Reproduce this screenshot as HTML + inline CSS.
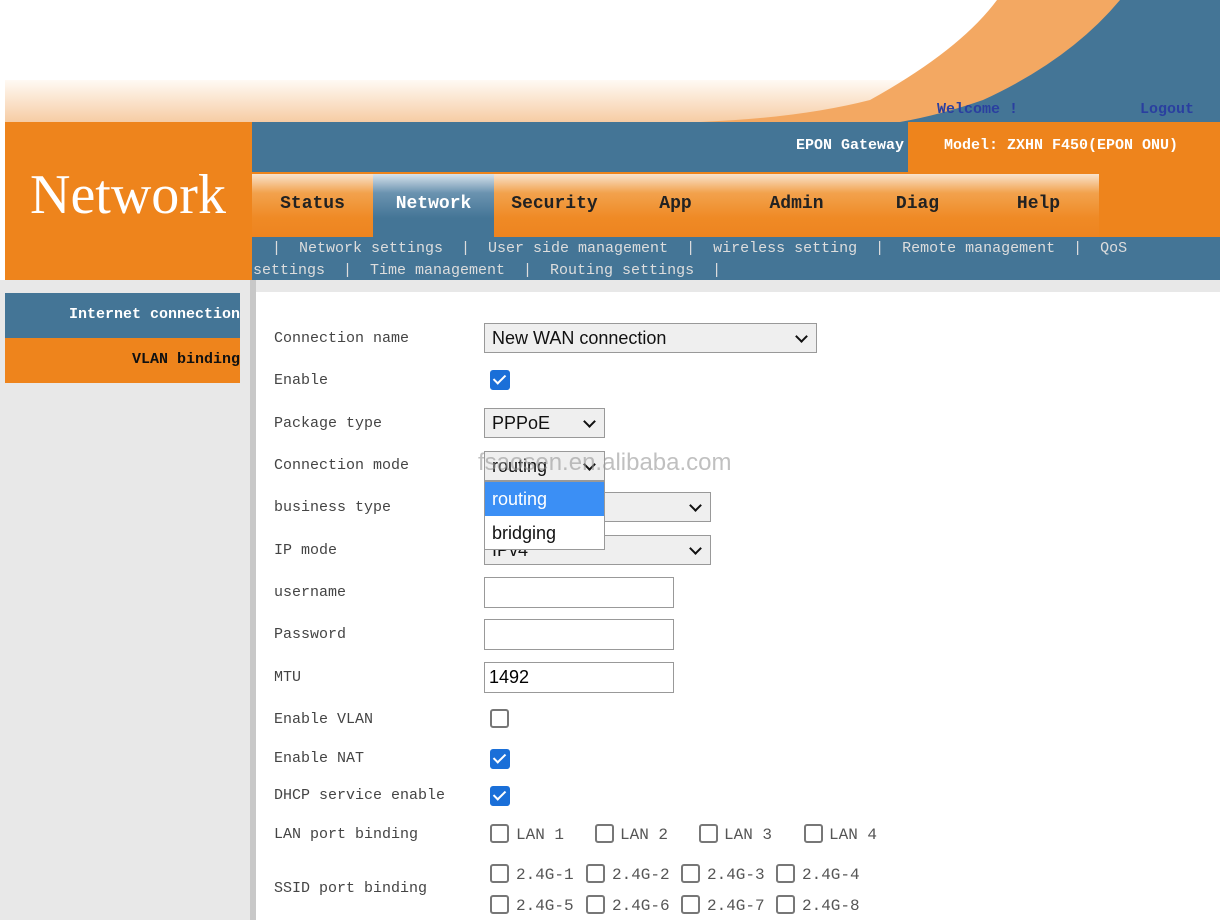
<!DOCTYPE html>
<html><head><meta charset="utf-8"><style>
*{margin:0;padding:0;box-sizing:border-box}
body{width:1220px;height:920px;overflow:hidden;background:#fff;position:relative;font-family:"Liberation Mono",monospace}
.abs{position:absolute}
.lbl{position:absolute;left:274px;font-family:"Liberation Mono",monospace;font-size:15px;color:#444}
.sel{position:absolute;background:#efefef;border:1px solid #999;font-family:"Liberation Sans",sans-serif;font-size:18px;color:#111;padding-left:7px;line-height:28px}
.sel:after{content:"";position:absolute;right:10px;top:8px;width:7px;height:7px;border-right:2px solid #111;border-bottom:2px solid #111;transform:rotate(45deg)}
.inp{position:absolute;left:484px;width:190px;height:31px;border:1px solid #999;background:#fff;font-family:"Liberation Sans",sans-serif;font-size:18px;padding-left:4px;line-height:29px}
.cb{position:absolute;width:20px;height:20px;border-radius:3px;background:#1a6fd8}
.cb:after{content:"";position:absolute;left:6px;top:2px;width:5px;height:10px;border-right:2.5px solid #fff;border-bottom:2.5px solid #fff;transform:rotate(45deg)}
.ub{position:absolute;width:19px;height:19px;border:2px solid #777;border-radius:3px;background:#fff}
.ct{position:absolute;font-family:"Liberation Mono",monospace;font-size:16px;color:#555}
.tab{position:absolute;top:174px;height:63px;width:121px;text-align:center;line-height:60px;font-family:"Liberation Mono",monospace;font-weight:bold;font-size:18px;color:#222;background:linear-gradient(#f9e3cd,#f2a24d 30%,#ef8a25 70%,#ee8420)}
.sub{color:#ddd;font-size:15px}
</style></head><body>
<svg class="abs" style="left:0;top:0" width="1220" height="125">
<defs><linearGradient id="pg" x1="0" y1="0" x2="0" y2="1"><stop offset="0" stop-color="#fffaf4"/><stop offset="1" stop-color="#f6cca4"/></linearGradient></defs>
<rect x="5" y="80" width="1215" height="42" fill="url(#pg)"/>
<path d="M997 0 Q960 50 870 100 Q800 118 700 122 L1220 122 L1220 0 Z" fill="#f3a862"/>
<path d="M1120 0 Q1070 60 983 100 Q940 115 900 122 L1220 122 L1220 0 Z" fill="#447596"/>
</svg>
<div class="abs" style="left:937px;top:101px;font-family:'Liberation Mono',monospace;font-weight:bold;font-size:15px;color:#2a3fa0">Welcome !</div>
<div class="abs" style="left:1140px;top:101px;font-family:'Liberation Mono',monospace;font-weight:bold;font-size:15px;color:#2a3fa0">Logout</div>
<div class="abs" style="left:5px;top:122px;width:247px;height:158px;background:#ee841c"></div>
<div class="abs" style="left:30px;top:163px;font-family:'Liberation Serif',serif;font-size:56px;color:#fff">Network</div>
<div class="abs" style="left:252px;top:122px;width:968px;height:50px;background:#447596"></div>
<div class="abs" style="left:908px;top:122px;width:312px;height:115px;background:#ee841c"></div>
<div class="abs" style="left:796px;top:137px;width:112px;overflow:hidden;white-space:nowrap;font-family:'Liberation Mono',monospace;font-weight:bold;font-size:15px;color:#fff">EPON Gateway</div>
<div class="abs" style="left:944px;top:137px;font-family:'Liberation Mono',monospace;font-weight:bold;font-size:15px;color:#fff">Model: ZXHN F450(EPON ONU)</div>
<div class="abs" style="left:252px;top:172px;width:968px;height:65px;background:#ee841c"></div>
<div class="tab" style="left:252px">Status</div>
<div class="tab" style="left:373px;background:linear-gradient(#d8e3ec,#6b93b0 30%,#447596 70%);color:#fff">Network</div>
<div class="tab" style="left:494px">Security</div>
<div class="tab" style="left:615px">App</div>
<div class="tab" style="left:736px">Admin</div>
<div class="tab" style="left:857px">Diag</div>
<div class="tab" style="left:978px">Help</div>
<div class="abs" style="left:252px;top:237px;width:968px;height:43px;background:#447596"></div>
<div class="abs sub" style="left:272px;top:238px;white-space:pre;line-height:22px">|  Network settings  |  User side management  |  wireless setting  |  Remote management  |  QoS</div>
<div class="abs sub" style="left:253px;top:260px;white-space:pre;line-height:22px">settings  |  Time management  |  Routing settings  |</div>
<div class="abs" style="left:0;top:280px;width:1220px;height:640px;background:#e8e8e8"></div>
<div class="abs" style="left:250px;top:280px;width:6px;height:640px;background:#c8c8c8"></div>
<div class="abs" style="left:256px;top:292px;width:964px;height:628px;background:#fff"></div>
<div class="abs" style="left:5px;top:293px;width:235px;height:45px;background:#447596;color:#fff;font-weight:bold;font-size:15px;text-align:right;line-height:44px;white-space:nowrap;overflow:hidden;font-family:'Liberation Mono',monospace">Internet connection</div>
<div class="abs" style="left:5px;top:338px;width:235px;height:45px;background:#ee841c;color:#111;font-weight:bold;font-size:15px;text-align:right;line-height:44px;font-family:'Liberation Mono',monospace">VLAN binding</div>

<div class="lbl" style="top:330px">Connection name</div>
<div class="lbl" style="top:372px">Enable</div>
<div class="lbl" style="top:415px">Package type</div>
<div class="lbl" style="top:457px">Connection mode</div>
<div class="lbl" style="top:499px">business type</div>
<div class="lbl" style="top:542px">IP mode</div>
<div class="lbl" style="top:584px">username</div>
<div class="lbl" style="top:626px">Password</div>
<div class="lbl" style="top:669px">MTU</div>
<div class="lbl" style="top:711px">Enable VLAN</div>
<div class="lbl" style="top:750px">Enable NAT</div>
<div class="lbl" style="top:787px">DHCP service enable</div>
<div class="lbl" style="top:826px">LAN port binding</div>
<div class="lbl" style="top:880px">SSID port binding</div>

<div class="sel" style="left:484px;top:323px;width:333px;height:30px">New WAN connection</div>
<div class="cb" style="left:490px;top:370px"></div>
<div class="sel" style="left:484px;top:408px;width:121px;height:30px">PPPoE</div>
<div class="sel" style="left:484px;top:451px;width:121px;height:30px">routing</div>
<div class="sel" style="left:484px;top:492px;width:227px;height:30px"></div>
<div class="sel" style="left:484px;top:535px;width:227px;height:30px">IPv4</div>
<div class="abs" style="left:484px;top:481px;width:121px;height:69px;background:#fff;border:1px solid #999;font-family:'Liberation Sans',sans-serif;font-size:18px">
<div style="background:#3b8ff5;color:#fff;height:34px;line-height:34px;padding-left:7px">routing</div>
<div style="height:34px;line-height:34px;padding-left:7px;color:#111">bridging</div></div>
<div class="abs" style="left:478px;top:449px;font-family:'Liberation Sans',sans-serif;font-size:24px;color:rgba(150,150,150,.6)">fsaosen.en.alibaba.com</div>
<div class="inp" style="top:577px"></div>
<div class="inp" style="top:619px"></div>
<div class="inp" style="top:662px">1492</div>
<div class="ub" style="left:490px;top:709px"></div>
<div class="cb" style="left:490px;top:749px"></div>
<div class="cb" style="left:490px;top:786px"></div>
<div class="ub" style="left:490px;top:824px"></div><div class="ct" style="left:516px;top:826px">LAN 1</div>
<div class="ub" style="left:595px;top:824px"></div><div class="ct" style="left:620px;top:826px">LAN 2</div>
<div class="ub" style="left:699px;top:824px"></div><div class="ct" style="left:724px;top:826px">LAN 3</div>
<div class="ub" style="left:804px;top:824px"></div><div class="ct" style="left:829px;top:826px">LAN 4</div>
<div class="ub" style="left:490px;top:864px"></div><div class="ct" style="left:516px;top:866px">2.4G-1</div>
<div class="ub" style="left:586px;top:864px"></div><div class="ct" style="left:612px;top:866px">2.4G-2</div>
<div class="ub" style="left:681px;top:864px"></div><div class="ct" style="left:707px;top:866px">2.4G-3</div>
<div class="ub" style="left:776px;top:864px"></div><div class="ct" style="left:802px;top:866px">2.4G-4</div>
<div class="ub" style="left:490px;top:895px"></div><div class="ct" style="left:516px;top:897px">2.4G-5</div>
<div class="ub" style="left:586px;top:895px"></div><div class="ct" style="left:612px;top:897px">2.4G-6</div>
<div class="ub" style="left:681px;top:895px"></div><div class="ct" style="left:707px;top:897px">2.4G-7</div>
<div class="ub" style="left:776px;top:895px"></div><div class="ct" style="left:802px;top:897px">2.4G-8</div>
</body></html>
